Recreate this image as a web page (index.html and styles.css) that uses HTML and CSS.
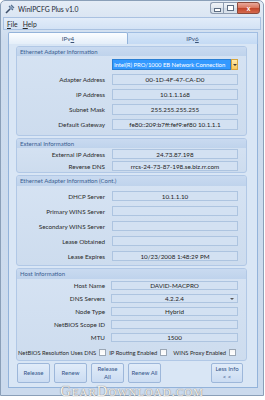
FILE: index.html
```html
<!DOCTYPE html>
<html>
<head>
<meta charset="utf-8">
<link rel="stylesheet" href="styles.css">
</head>
<body>
<div class="window">
  <div class="titlebar">
    <svg class="appicon" width="10" height="10" viewBox="0 0 10 10">
      <path d="M1 9 L5 5" stroke="#3d4f6a" stroke-width="1.6" fill="none"/>
      <path d="M4 2 L8 6 M6 1 L9 4" stroke="#56708f" stroke-width="1.2" fill="none"/>
      <rect x="4.5" y="2.5" width="3" height="3" fill="#7e96b4" transform="rotate(45 6 4)"/>
    </svg>
    <span class="title">WinIPCFG Plus v1.0</span>
    <div class="caps">
      <span class="cb min"><i></i></span>
      <span class="cb max"><i></i></span>
      <span class="cb close">x</span>
    </div>
  </div>
  <div class="menubar"><span class="mi"><u>F</u>ile</span><span class="mi"><u>H</u>elp</span></div>
  <div class="tabctl">
    <div class="tabs">
      <div class="tab active">IPv<u>4</u></div>
      <div class="tab">IPv<u>6</u></div>
    </div>
    <div class="panel">
      <div class="sec s1">
        <div class="head">Ethernet Adapter Information</div>
        <div class="body">
          <div class="row">
            <span></span>
            <div class="combo"><span class="sel">Intel(R) PRO/1000 EB Network Connection</span><span class="drop"><i></i></span></div>
          </div>
          <div class="row"><span class="lbl">Adapter Address</span><span class="fld">00-1D-4F-47-CA-D0</span></div>
          <div class="row"><span class="lbl">IP Address</span><span class="fld">10.1.1.168</span></div>
          <div class="row"><span class="lbl">Subnet Mask</span><span class="fld">255.255.255.255</span></div>
          <div class="row"><span class="lbl">Default Gateway</span><span class="fld">fe80::209:b7ff:fef9:ef80 10.1.1.1</span></div>
        </div>
      </div>
      <div class="sec s2">
        <div class="head">External Information</div>
        <div class="body">
          <div class="row"><span class="lbl">External IP Address</span><span class="fld">24.73.87.198</span></div>
          <div class="row"><span class="lbl">Reverse DNS</span><span class="fld">rrcs-24-73-87-198.se.biz.rr.com</span></div>
        </div>
      </div>
      <div class="sec s3">
        <div class="head">Ethernet Adapter Information (Cont.)</div>
        <div class="body">
          <div class="row"><span class="lbl">DHCP Server</span><span class="fld">10.1.1.10</span></div>
          <div class="row"><span class="lbl">Primary WINS Server</span><span class="fld"></span></div>
          <div class="row"><span class="lbl">Secondary WINS Server</span><span class="fld"></span></div>
          <div class="row"><span class="lbl">Lease Obtained</span><span class="fld"></span></div>
          <div class="row"><span class="lbl">Lease Expires</span><span class="fld">10/23/2008 1:48:29 PM</span></div>
        </div>
      </div>
      <div class="sec s4">
        <div class="head">Host Information</div>
        <div class="body">
          <div class="row"><span class="lbl">Host Name</span><span class="fld">DAVID-MACPRO</span></div>
          <div class="row"><span class="lbl">DNS Servers</span><span class="fld dd">4.2.2.4<i class="tri"></i></span></div>
          <div class="row"><span class="lbl">Node Type</span><span class="fld">Hybrid</span></div>
          <div class="row"><span class="lbl">NetBIOS Scope ID</span><span class="fld"></span></div>
          <div class="row"><span class="lbl">MTU</span><span class="fld">1500</span></div>
          <div class="checks">
            <span class="ck c1">NetBIOS Resolution Uses DNS <b class="box"></b></span>
            <span class="ck c2">IP Routing Enabled <b class="box"></b></span>
            <span class="ck c3">WINS Proxy Enabled <b class="box"></b></span>
          </div>
        </div>
      </div>
      <div class="buttons">
        <span class="btn">Release</span>
        <span class="btn">Renew</span>
        <span class="btn">Release<br>All</span>
        <span class="btn">Renew All</span>
        <span class="btn last">Less Info<br>&lt; &lt;</span>
      </div>
    </div>
  </div>
</div>
<div class="watermark">GearDownload.com</div>
</body>
</html>
```
FILE: styles.css
```css
body {
  margin: 0;
  width: 265px;
  height: 400px;
  overflow: hidden;
  position: relative;
  background: #ffffff;
  font-family: Lato, "Liberation Sans", sans-serif;
  font-size: 6.3px;
  color: #2a2a2a;
}
.window {
  box-sizing: border-box;
  width: 264px;
  height: 396px;
  border: 1px solid #8a9fb8;
  border-radius: 5px 5px 0 0;
  background: linear-gradient(#e4ecf6, #cddcee 40px, #cbdaed);
}
.titlebar {
  height: 16px;
  display: flex;
  align-items: center;
  padding-left: 4px;
}
.appicon { flex: none; }
.title {
  margin-left: 3px;
  font-size: 6.8px;
  color: #1b2533;
}
.caps {
  margin-left: auto;
  display: flex;
  align-self: flex-start;
  margin-top: 1px;
  margin-right: 3px;
}
.cb {
  box-sizing: border-box;
  height: 12px;
  border: 1px solid #8e9cb0;
  display: flex;
  align-items: center;
  justify-content: center;
  background: linear-gradient(#f1f4f8, #dfe6ee 50%, #cfd9e5 51%, #dbe3ec);
}
.min { width: 13px; border-radius: 3px 0 0 3px; border-right: none; }
.max { width: 14px; border-right: none; }
.close {
  width: 23px;
  border-radius: 0 3px 3px 0;
  border-color: #8a4a3c;
  background: linear-gradient(#e9a99a, #d9735b 50%, #c2452a 51%, #d4694e);
  color: #fff;
  font-size: 7px;
  font-weight: bold;
  line-height: 1;
}
.min i { width: 5px; height: 2px; border: 1px solid #5d6d82; margin-top: 4px; background: #fff; }
.max i { width: 5px; height: 4px; border: 1px solid #5d6d82; background: #fff; }
.menubar {
  box-sizing: border-box;
  height: 13px;
  margin: 0 2px;
  border: 1px solid #a9c1e1;
  background: linear-gradient(#e2ecf9, #d3e2f5);
  display: flex;
  align-items: center;
  padding-left: 3px;
  font-size: 6.8px;
}
.mi { margin-right: 5px; }
.tabctl {
  padding: 2px 5px 0 7px;
}
.tabs {
  display: flex;
  height: 12px;
}
.tab {
  box-sizing: border-box;
  height: 12px;
  display: flex;
  align-items: center;
  justify-content: center;
  font-size: 6.3px;
  color: #3a5276;
}
.tab:first-child {
  width: 120px;
  border: 1px solid #93b3da;
  border-bottom: none;
  border-radius: 2px 2px 0 0;
  background: linear-gradient(#fbfdff, #e4eef9);
}
.tab:last-child {
  width: 130px;
  border: 1px solid #a0bde2;
  border-left: none;
  border-bottom: none;
  background: linear-gradient(#d6e6f8, #c4daf4);
}
.panel {
  box-sizing: border-box;
  width: 250px;
  height: 344px;
  border: 1px solid #93b3da;
  border-top: none;
  background: #d9e6f5;
  padding: 2px 10px 0 7px;
  display: flex;
  flex-direction: column;
  gap: 2px;
}
.sec {
  border: 1px solid #b1c8e6;
  border-radius: 3px;
  background: linear-gradient(#d6e3f3, #cddcee);
  overflow: hidden;
}
.head {
  height: 9px;
  line-height: 9px;
  padding-left: 3px;
  background: linear-gradient(#c9daf0, #bfd3ec);
  color: #3a5d90;
  font-size: 6px;
}
.s3 .head, .s4 .head { height: 10px; line-height: 10px; }
.body {
  display: flex;
  flex-direction: column;
}
.row {
  display: grid;
  grid-template-columns: 88px 126px;
  column-gap: 7px;
  align-items: center;
}
.lbl {
  text-align: right;
  white-space: nowrap;
  color: #2a2a2a;
}
.fld {
  box-sizing: border-box;
  border: 1px solid #adc4e0;
  background: #d3e1f2;
  display: flex;
  align-items: center;
  justify-content: center;
  white-space: nowrap;
  overflow: hidden;
  color: #222;
  position: relative;
}
.s1 .body { padding: 3px 0 5px; gap: 4px; }
.s1 .row { height: 11px; }
.s1 .fld { height: 11px; }
.s2 .body { padding: 1px 0 1px; gap: 2px; }
.s2 .row, .s2 .fld { height: 10px; }
.s3 .body { padding: 5px 0 4px; gap: 5px; }
.s3 .row, .s3 .fld { height: 10px; }
.s4 .body { padding: 2px 0 3px; gap: 4px; }
.s4 .row, .s4 .fld { height: 9px; }
.s4 .row { grid-template-columns: 88px 127px; column-gap: 6px; }
.combo {
  height: 11px;
  display: flex;
}
.sel {
  box-sizing: border-box;
  flex: none;
  width: 119px;
  height: 11px;
  background: #3399ff;
  border: 1px solid #2a7fd4;
  color: #ffffff;
  display: flex;
  align-items: center;
  padding-left: 1px;
  white-space: nowrap;
  overflow: hidden;
  font-size: 5.95px;
  letter-spacing: -0.05px;
}
.drop {
  box-sizing: border-box;
  width: 7px;
  height: 11px;
  background: linear-gradient(#ffe9a8, #f7c75a);
  border: 1px solid #d6a640;
  display: flex;
  align-items: center;
  justify-content: center;
}
.drop i, .tri {
  width: 0;
  height: 0;
  border-left: 2px solid transparent;
  border-right: 2px solid transparent;
  border-top: 2px solid #3a3a3a;
}
.tri {
  position: absolute;
  right: 3px;
  top: 3px;
  border-top-color: #555;
}
.checks {
  display: flex;
  align-items: center;
  height: 9px;
  margin-top: 2px;
  padding-left: 1px;
  white-space: nowrap;
  font-size: 5.8px;
}
.ck {
  display: flex;
  align-items: center;
  gap: 3px;
}
.c2 { margin-left: 3px; }
.c3 { margin-left: 6px; }
.box {
  box-sizing: border-box;
  width: 7px;
  height: 7px;
  border: 1px solid #9aa6b4;
  background: linear-gradient(#f6f6f6, #ffffff);
}
.buttons {
  display: flex;
  gap: 4px;
  padding-left: 1px;
  padding-right: 4px;
  margin-top: 0;
}
.btn {
  box-sizing: border-box;
  width: 33px;
  height: 20px;
  border: 1px solid #9db7da;
  border-radius: 2px;
  background: linear-gradient(#e1ecf9, #cbdcf2);
  color: #34558a;
  display: flex;
  align-items: center;
  justify-content: center;
  text-align: center;
  line-height: 8px;
  font-size: 6px;
}
.btn.last { margin-left: auto; width: 32px; }
.watermark {
  position: absolute;
  left: 60px;
  top: 384px;
  font-family: "Liberation Serif", serif;
  font-variant: small-caps;
  font-size: 15px;
  letter-spacing: 0.9px;
  line-height: 15px;
  color: #f2f2f2;
  text-shadow: 0 0 1px #7a7a7a, 0 0 1px #9a9a9a;
}
```
